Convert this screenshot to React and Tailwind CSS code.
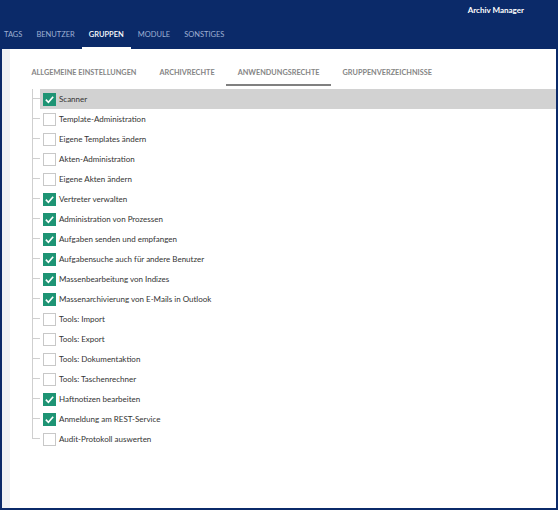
import React from "react";

const mainTabs = [
  { label: "TAGS" },
  { label: "BENUTZER" },
  { label: "GRUPPEN", active: true },
  { label: "MODULE" },
  { label: "SONSTIGES" },
];

const subTabs = [
  { label: "ALLGEMEINE EINSTELLUNGEN" },
  { label: "ARCHIVRECHTE" },
  { label: "ANWENDUNGSRECHTE", active: true },
  { label: "GRUPPENVERZEICHNISSE" },
];

const rights = [
  { label: "Scanner", checked: true, selected: true },
  { label: "Template-Administration" },
  { label: "Eigene Templates ändern" },
  { label: "Akten-Administration" },
  { label: "Eigene Akten ändern" },
  { label: "Vertreter verwalten", checked: true },
  { label: "Administration von Prozessen", checked: true },
  { label: "Aufgaben senden und empfangen", checked: true },
  { label: "Aufgabensuche auch für andere Benutzer", checked: true },
  { label: "Massenbearbeitung von Indizes", checked: true },
  { label: "Massenarchivierung von E-Mails in Outlook", checked: true },
  { label: "Tools: Import" },
  { label: "Tools: Export" },
  { label: "Tools: Dokumentaktion" },
  { label: "Tools: Taschenrechner" },
  { label: "Haftnotizen bearbeiten", checked: true },
  { label: "Anmeldung am REST-Service", checked: true },
  { label: "Audit-Protokoll auswerten" },
];

const Checkbox = ({ checked }) =>
  checked ? (
    <div className="w-[13px] h-[13px] bg-[#1e9474] flex items-center justify-center shrink-0">
      <svg viewBox="0 0 12 12" className="w-[11px] h-[11px]">
        <path d="M2 6.2 L4.8 9 L10 3" fill="none" stroke="white" strokeWidth="1.8" />
      </svg>
    </div>
  ) : (
    <div className="w-[13px] h-[13px] bg-white border border-[#c8c8c8] shrink-0" />
  );

const Row = ({ item, last }) => (
  <div className="flex h-[20px]">
    <div className="w-[8px] flex flex-col shrink-0">
      <div className="h-[10px] border-l border-b border-[#cfcfcf]" />
      <div className={last ? "h-[10px]" : "h-[10px] border-l border-[#cfcfcf]"} />
    </div>
    <div
      className={`flex-1 flex items-center gap-[3px] pl-[3px] ${
        item.selected ? "bg-[#d2d2d2]" : ""
      }`}
    >
      <Checkbox checked={item.checked} />
      <span className="text-[8px] text-[#333] whitespace-nowrap">{item.label}</span>
    </div>
  </div>
);

export default function App() {
  return (
    <div
      className="w-[558px] h-[510px] bg-[#0b2a69] flex flex-col overflow-hidden"
      style={{ fontFamily: "Lato, 'Open Sans', sans-serif" }}
    >
      <div className="h-[27px] flex justify-end items-start pt-[4px] pr-[34px]">
        <span className="text-white text-[8px] font-bold">Archiv Manager</span>
      </div>

      <div className="h-[22px] flex items-stretch ml-[-3px]">
        {mainTabs.map((t) => (
          <div
            key={t.label}
            className={`px-[7px] pb-[4px] flex items-center text-[7.5px] ${
              t.active
                ? "text-white font-semibold border-b-2 border-white"
                : "text-[#9fb0d3] border-b-2 border-transparent"
            }`}
          >
            {t.label}
          </div>
        ))}
      </div>

      <div className="flex-1 flex mx-[2px] mb-[2px] bg-white">
        <div className="w-[8px] bg-[#eff1f4]" />
        <div className="flex-1 flex flex-col">
          <div className="flex h-[38px] pl-[10px] pt-[13px]">
            {subTabs.map((t) => (
              <div
                key={t.label}
                className={`px-[11.5px] h-[24px] flex items-center text-[7.3px] font-bold text-[#858585] ${
                  t.active ? "border-b-2 border-[#808080]" : "border-b-2 border-transparent"
                }`}
              >
                {t.label}
              </div>
            ))}
          </div>
          <div className="pl-[22px] pt-[2px]">
            {rights.map((r, i) => (
              <Row key={r.label} item={r} last={i === rights.length - 1} />
            ))}
          </div>
        </div>
      </div>
    </div>
  );
}
